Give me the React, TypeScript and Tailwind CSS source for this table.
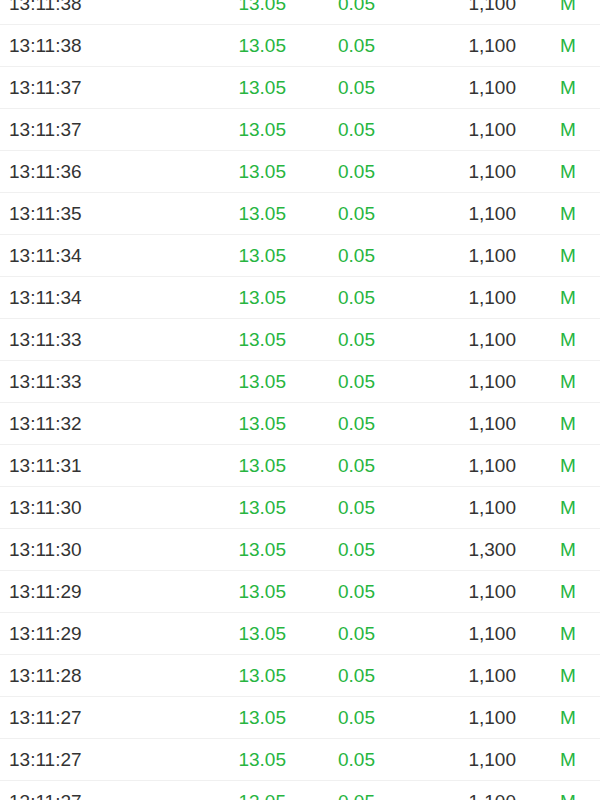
const trades: [string, string][] = [
  ['13:11:38', '1,100'],
  ['13:11:38', '1,100'],
  ['13:11:37', '1,100'],
  ['13:11:37', '1,100'],
  ['13:11:36', '1,100'],
  ['13:11:35', '1,100'],
  ['13:11:34', '1,100'],
  ['13:11:34', '1,100'],
  ['13:11:33', '1,100'],
  ['13:11:33', '1,100'],
  ['13:11:32', '1,100'],
  ['13:11:31', '1,100'],
  ['13:11:30', '1,100'],
  ['13:11:30', '1,300'],
  ['13:11:29', '1,100'],
  ['13:11:29', '1,100'],
  ['13:11:28', '1,100'],
  ['13:11:27', '1,100'],
  ['13:11:27', '1,100'],
  ['13:11:27', '1,100'],
];

export default function App() {
  return (
    <div
      className="h-[800px] w-[600px] overflow-hidden bg-white"
      style={{ fontFamily: '"Liberation Sans", Arial, sans-serif' }}
    >
      {/* list is scrolled: first row half hidden */}
      <div className="-mt-[17px]">
        {trades.map(([time, vol], i) => (
          <div
            key={i}
            className="flex h-[42px] items-center border-b border-[#f0f0f0] text-[19px] leading-none"
          >
            <div className="w-[200px] pl-[9px] text-[#333333]">{time}</div>
            <div className="w-[86px] text-right text-[#27b53f]">13.05</div>
            <div className="ml-[52px] w-[60px] text-[#27b53f]">0.05</div>
            <div className="w-[118px] text-right text-[#333333]">{vol}</div>
            <div className="ml-[44px] text-[#27b53f]">M</div>
          </div>
        ))}
      </div>
    </div>
  );
}
